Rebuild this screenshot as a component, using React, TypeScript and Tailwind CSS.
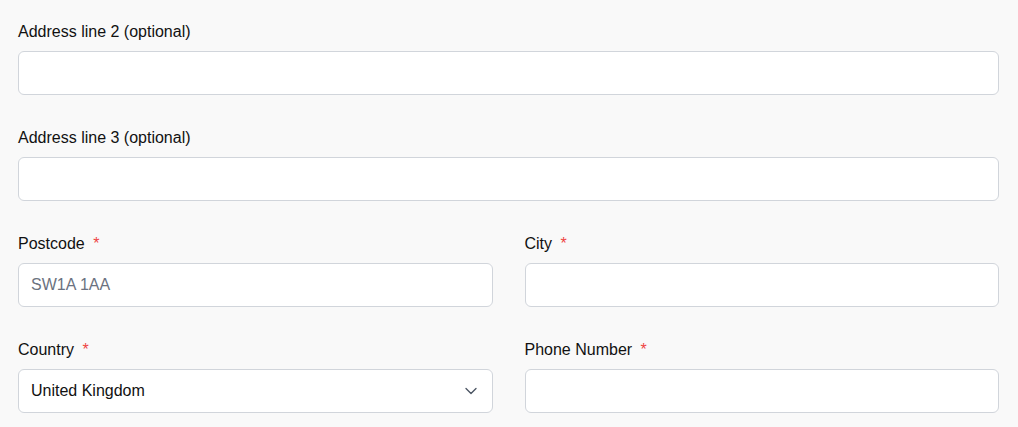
import React from 'react';
import { ChevronDown } from 'lucide-react';

interface FieldProps {
  label: string;
  required?: boolean;
  children: React.ReactNode;
}

const Field: React.FC<FieldProps> = ({ label, required = false, children }) => (
  <div className="flex flex-col">
    <label className="mb-[7px] text-[16px] leading-6 text-[#111111]">
      {label}
      {required && <> <span className="ml-1 text-[#ef4444]">*</span></>}
    </label>
    {children}
  </div>
);

const inputClass =
  'h-[44px] w-full rounded-md border border-[#d1d5db] bg-white px-3 text-[16px] text-[#111111] placeholder:text-[#6b7280] outline-none';

export default function App() {
  return (
    <div
      className="min-h-screen bg-[#f9f9f9] pl-[18px] pr-[19px] pt-5"
      style={{ fontFamily: '"Liberation Sans", Arial, sans-serif' }}
    >
      <div className="flex flex-col gap-[31px]">
        <Field label="Address line 2 (optional)">
          <input type="text" className={inputClass} />
        </Field>

        <Field label="Address line 3 (optional)">
          <input type="text" className={inputClass} />
        </Field>

        <div className="grid grid-cols-2 gap-x-8">
          <Field label="Postcode" required>
            <input type="text" placeholder="SW1A 1AA" className={inputClass} />
          </Field>
          <Field label="City" required>
            <input type="text" className={inputClass} />
          </Field>
        </div>

        <div className="grid grid-cols-2 gap-x-8">
          <Field label="Country" required>
            <div className="relative">
              <select
                defaultValue="United Kingdom"
                className={inputClass + ' appearance-none pr-10'}
              >
                <option>United Kingdom</option>
                <option>Ireland</option>
                <option>France</option>
              </select>
              <ChevronDown
                size={20}
                strokeWidth={1.6}
                className="pointer-events-none absolute right-3 top-1/2 -translate-y-1/2 text-[#4b5563]"
              />
            </div>
          </Field>
          <Field label="Phone Number" required>
            <input type="tel" className={inputClass} />
          </Field>
        </div>
      </div>
    </div>
  );
}
